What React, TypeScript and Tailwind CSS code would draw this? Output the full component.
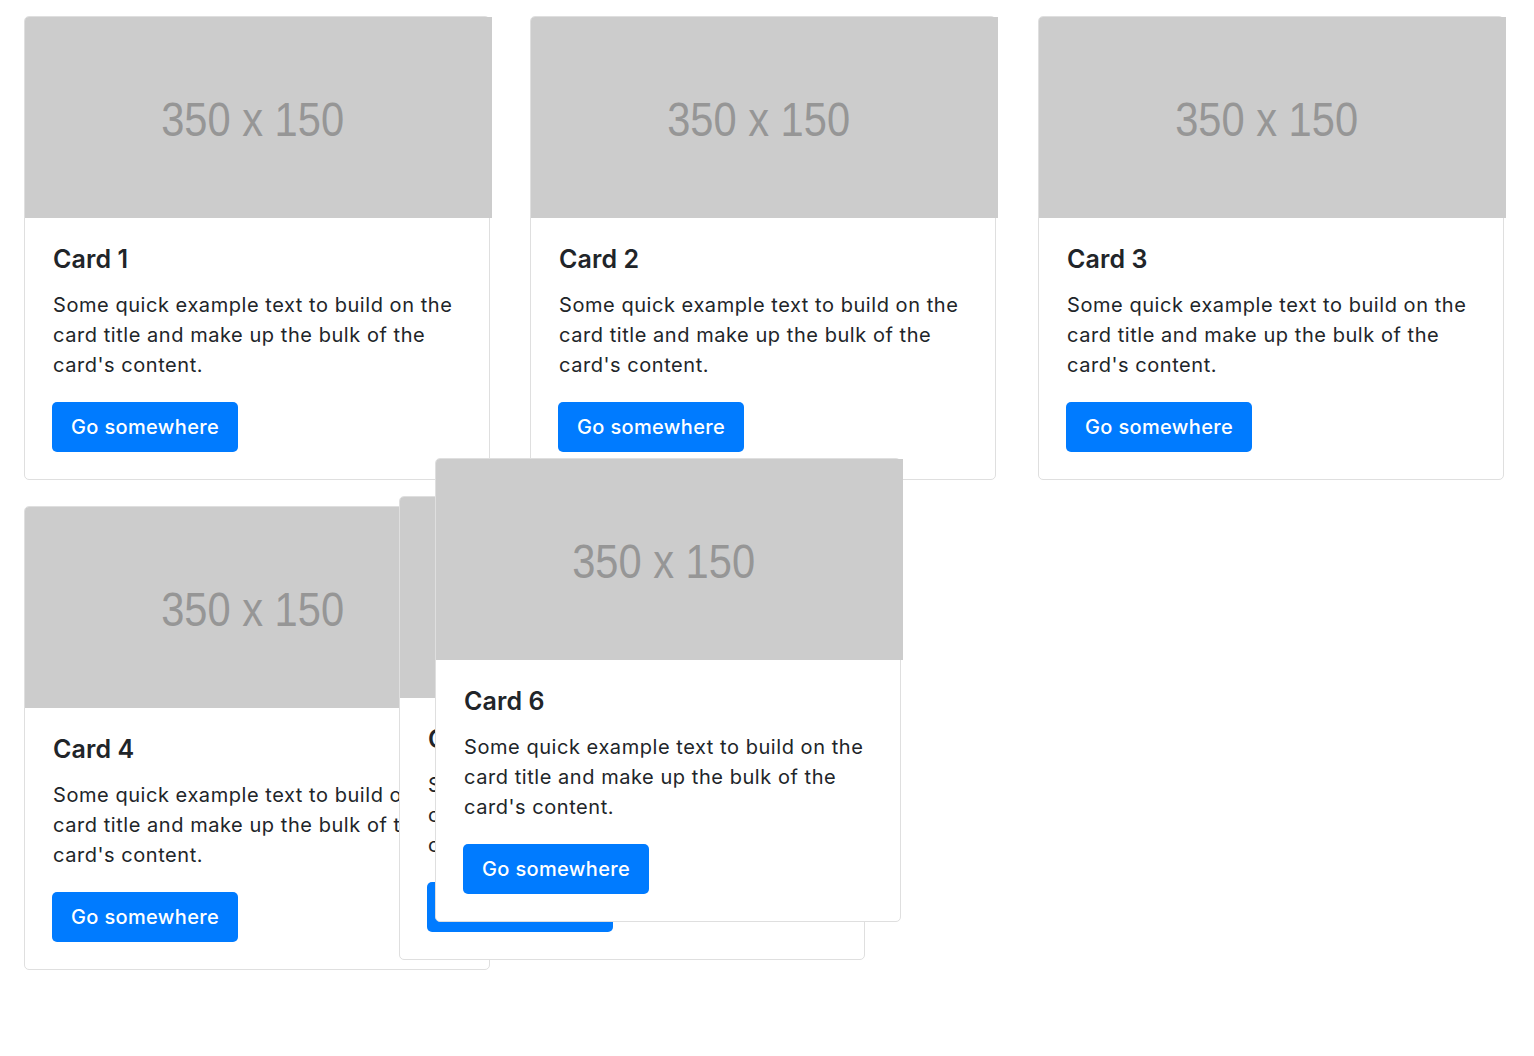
import React from "react";

const TEXT =
  "Some quick example text to build on the card title and make up the bulk of the card's content.";

function Card({ title, className = "" }: { title: string; className?: string }) {
  return (
    <div
      className={
        "w-[466px] h-[464px] border border-[#dfdfdf] rounded-[5px] bg-white flex flex-col " +
        className
      }
    >
      <div className="w-[467px] h-[201px] shrink-0 bg-[#cccccc] rounded-tl-[4px] flex items-center justify-center">
        <span
          className="inline-block mr-[12px] mt-[3px] scale-x-[0.85] text-[49px] leading-none text-[#969696]"
          style={{ fontFamily: '"Liberation Sans", Arial, sans-serif' }}
        >
          350 x 150
        </span>
      </div>
      <div
        className="flex flex-col items-start pt-[26px] px-[28px] pb-[27px] text-[#212529]"
        style={{ fontFamily: 'Inter, "Noto Sans", sans-serif' }}
      >
        <h5 className="h-[30px] text-[25px] leading-[30px] font-semibold tracking-[0.1px] mb-[16px]">
          {title}
        </h5>
        <p className="h-[90px] text-[20px] leading-[30px] tracking-[0.55px]">{TEXT}</p>
        <button className="-ml-[1px] mt-[22px] h-[50px] px-[19px] rounded-[5px] bg-[#007bff] text-white text-[20px] leading-[30px] font-medium tracking-[0.35px]">
          Go somewhere
        </button>
      </div>
    </div>
  );
}

export default function App() {
  return (
    <div className="relative w-[1534px] h-[1056px] bg-white overflow-hidden">
      <div className="grid grid-cols-[466px_466px_466px] gap-x-[41px] gap-y-[26px] pt-[16px] pl-[24px]">
        <Card title="Card 1" />
        <Card title="Card 2" className="-ml-[1px]" />
        <Card title="Card 3" />
        <Card title="Card 4" />
      </div>
      <Card title="Card 5" className="absolute left-[399px] top-[496px]" />
      <Card title="Card 6" className="absolute left-[435px] top-[458px]" />
    </div>
  );
}
